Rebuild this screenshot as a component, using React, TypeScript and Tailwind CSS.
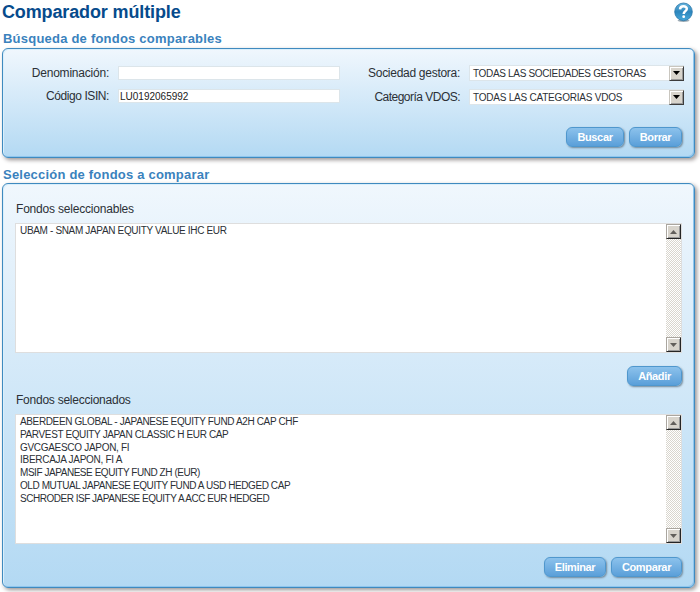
import React from "react";

const DITHER =
  "bg-[#f6f4ef] bg-[repeating-conic-gradient(#d9d6ce_0_25%,#ffffff_0_50%)] bg-[length:2px_2px]";

function Button({ className, children }: { className: string; children: React.ReactNode }) {
  return (
    <button
      className={`flex h-[20px] items-center justify-center rounded-[6px] border border-[#4f97cd] bg-gradient-to-b from-[#8cc2ec] to-[#5a9fd9] text-[11px] leading-none font-bold tracking-[-0.35px] text-white shadow-[1px_1px_2px_#71889a] ${className}`}
    >
      {children}
    </button>
  );
}

function Heading({ className, children }: { className: string; children: React.ReactNode }) {
  return <h2 className={`ml-[3px] h-[16px] text-[13px] leading-[16px] font-bold whitespace-nowrap text-[#3a82bd] ${className}`}>{children}</h2>;
}

function Panel({ className, children }: { className: string; children: React.ReactNode }) {
  return (
    <section
      className={`ml-[2px] w-[693px] rounded-[6px] border border-[#3f8abf] bg-gradient-to-b from-[#f0f7fd] to-[#b3d9f3] shadow-[inset_-1px_-1px_0_#8fc6ee,inset_1px_1px_0_#d9effc,2px_2px_4px_#9a9494] ${className}`}
    >
      {children}
    </section>
  );
}

function Arrow({ up = false }: { up?: boolean }) {
  return (
    <div className="flex h-[15px] w-[15px] items-center justify-center border border-t-[#aaa69f] border-r-[#252525] border-b-[#252525] border-l-[#aaa69f] bg-[#d8d4cc] shadow-[inset_1px_1px_0_#fff,inset_-1px_-1px_0_#999]">
      <svg width="7" height="4" viewBox="0 0 7 4">
        <path d={up ? "M0 4L3.5 0L7 4Z" : "M0 0H7L3.5 4Z"} fill="#625f5b" />
      </svg>
    </div>
  );
}

function Select({ className, children }: { className: string; children: React.ReactNode }) {
  return (
    <div className="flex h-[16px] w-[215px] items-center justify-between border border-[#dce5ea] bg-white pl-[3px]">
      <span className={`text-[10px] whitespace-nowrap ${className}`}>{children}</span>
      <div className="-mr-px flex h-[15px] w-[15px] shrink-0 items-center justify-center border border-t-[#c9c6bf] border-r-[#3c3c3c] border-b-[#3c3c3c] border-l-[#c9c6bf] bg-[#d8d4cc] shadow-[inset_1px_1px_0_#fff,inset_-1px_-1px_0_#999]">
        <svg width="7" height="4" viewBox="0 0 7 4">
          <path d="M0 0H7L3.5 4Z" fill="#000" />
        </svg>
      </div>
    </div>
  );
}

function ListBox({ items }: { items: { text: string; spacing: string }[] }) {
  return (
    <div className="flex h-[130px] w-[667px] border border-[#dedede] bg-white">
      <ul className="flex-1 pt-px pl-[4px] text-[10px] leading-[12.8px]">
        {items.map((item) => (
          <li key={item.text} className={`whitespace-nowrap ${item.spacing}`}>
            {item.text}
          </li>
        ))}
      </ul>
      <div className={`flex w-[15px] flex-col justify-between ${DITHER}`}>
        <Arrow up />
        <Arrow />
      </div>
    </div>
  );
}

const available = [{ text: "UBAM - SNAM JAPAN EQUITY VALUE IHC EUR", spacing: "tracking-[-0.34px]" }];

const selected = [
  { text: "ABERDEEN GLOBAL - JAPANESE EQUITY FUND A2H CAP CHF", spacing: "tracking-[-0.37px]" },
  { text: "PARVEST EQUITY JAPAN CLASSIC H EUR CAP", spacing: "tracking-[-0.37px]" },
  { text: "GVCGAESCO JAPON, FI", spacing: "tracking-[-0.3px]" },
  { text: "IBERCAJA JAPON, FI A", spacing: "tracking-[-0.28px]" },
  { text: "MSIF JAPANESE EQUITY FUND ZH (EUR)", spacing: "tracking-[-0.45px]" },
  { text: "OLD MUTUAL JAPANESE EQUITY FUND A USD HEDGED CAP", spacing: "tracking-[-0.41px]" },
  { text: "SCHRODER ISF JAPANESE EQUITY A ACC EUR HEDGED", spacing: "tracking-[-0.48px]" },
];

export default function App() {
  return (
    <main className="h-[592px] w-[700px] overflow-hidden bg-white font-['Liberation_Sans',Arial,sans-serif] text-[#2b3036]">
      <header className="flex h-[31px] items-start justify-between pr-[7px] pl-[2px]">
        <h1 className="pt-[2px] text-[18px] leading-[21px] font-bold tracking-[-0.13px] text-[#064b8c]">Comparador múltiple</h1>
        <svg className="mt-[2px]" width="19" height="20" viewBox="0 0 19 20">
          <defs>
            <linearGradient id="help" x1="0" y1="0" x2="0" y2="1">
              <stop offset="0" stopColor="#69b6df" />
              <stop offset="0.5" stopColor="#2d86bd" />
              <stop offset="1" stopColor="#45a8da" />
            </linearGradient>
          </defs>
          <ellipse cx="9.5" cy="18.6" rx="6" ry="1.3" fill="#9aa9b3" />
          <circle cx="9.5" cy="9.8" r="8.8" fill="url(#help)" stroke="#2775a8" strokeWidth="0.8" />
          <path d="M6 7.4C6.2 3.3 13 3.4 12.8 7C12.6 9.2 9.7 9.2 9.7 12" fill="none" stroke="#fff" strokeWidth="2.5" />
          <circle cx="9.7" cy="14.7" r="1.4" fill="#fff" />
        </svg>
      </header>

      <Heading className="tracking-[0.22px]">Búsqueda de fondos comparables</Heading>
      <Panel className="mt-px h-[110px]">
        <div className="flex pt-[16px] text-[12px]">
          <div className="flex w-[337px] flex-col gap-[7px]">
            <label className="flex h-[16px] items-center justify-end gap-[9px]">
              <span className="tracking-[-0.22px]">Denominación:</span>
              <span className="h-[14px] w-[222px] border border-[#dce5ea] bg-white" />
            </label>
            <label className="flex h-[16px] items-center justify-end gap-[9px]">
              <span className="tracking-[-0.42px]">Código ISIN:</span>
              <span className="flex h-[14px] w-[222px] items-center border border-[#dce5ea] bg-white pl-px text-[10px] text-[#222]">LU0192065992</span>
            </label>
          </div>
          <div className="flex w-[344px] flex-col gap-[8px]">
            <label className="flex h-[16px] items-center justify-end gap-[9px]">
              <span className="tracking-[-0.28px]">Sociedad gestora:</span>
              <Select className="tracking-[-0.33px]">TODAS LAS SOCIEDADES GESTORAS</Select>
            </label>
            <label className="flex h-[16px] items-center justify-end gap-[9px]">
              <span className="tracking-[-0.52px]">Categoría VDOS:</span>
              <Select className="tracking-[-0.22px]">TODAS LAS CATEGORIAS VDOS</Select>
            </label>
          </div>
        </div>
        <div className="mt-[22px] flex justify-end gap-[5px] pr-[12px]">
          <Button className="w-[58px]">Buscar</Button>
          <Button className="w-[53px]">Borrar</Button>
        </div>
      </Panel>

      <Heading className="mt-[9px] tracking-[0.21px]">Selección de fondos a comparar</Heading>
      <Panel className="h-[405px] pl-[12px]">
        <h3 className="mt-[17px] ml-px h-[22px] text-[12px] leading-[16px] tracking-[-0.2px]">Fondos seleccionables</h3>
        <ListBox items={available} />
        <div className="mt-[13px] flex justify-end pr-[12px]">
          <Button className="w-[55px]">Añadir</Button>
        </div>
        <h3 className="mt-[6px] ml-px h-[22px] text-[12px] leading-[16px] tracking-[-0.24px]">Fondos seleccionados</h3>
        <ListBox items={selected} />
        <div className="mt-[13px] flex justify-end gap-[5px] pr-[12px]">
          <Button className="w-[62px]">Eliminar</Button>
          <Button className="w-[71px]">Comparar</Button>
        </div>
      </Panel>
    </main>
  );
}
